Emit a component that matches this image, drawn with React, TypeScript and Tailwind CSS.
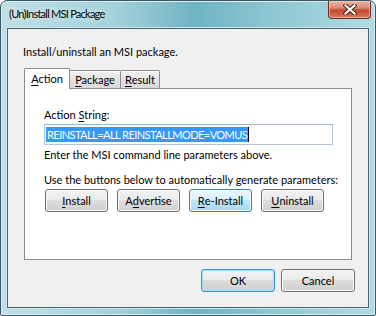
import React from 'react';

const font = { fontFamily: 'Lato, "Noto Sans", sans-serif' };

const U = ({ children }: { children: React.ReactNode }) => (
  <span className="underline underline-offset-[2px] decoration-[1px]">{children}</span>
);

type Kind = 'normal' | 'hot' | 'default';

const Btn = ({ kind = 'normal', wide, children }: { kind?: Kind; wide?: boolean; children: React.ReactNode }) => {
  const look =
    kind === 'hot'
      ? 'border-[#3c7fb1] bg-[linear-gradient(#eaf6fd_0%,#d9f0fc_45%,#bee6fd_50%,#a7d9f5_100%)] shadow-[inset_0_0_0_1px_#f4fbff]'
      : kind === 'default'
        ? 'border-[#3399dd] bg-[linear-gradient(#f2f2f2_0%,#ebebeb_45%,#dddddd_50%,#cfcfcf_100%)] shadow-[inset_0_0_0_1px_#9fe0f7]'
        : 'border-[#707070] bg-[linear-gradient(#f2f2f2_0%,#ebebeb_45%,#dddddd_50%,#cfcfcf_100%)] shadow-[inset_0_0_0_1px_#fbfbfb]';
  return (
    <div
      className={`${wide ? 'w-[74px]' : 'w-[63px]'} h-[23px] flex items-center justify-center rounded-[3px] border text-[11px] text-black ${look}`}
    >
      {children}
    </div>
  );
};

export default function App() {
  return (
    <div className="w-[376px] h-[316px] bg-white" style={font}>
      <div className="w-full h-full flex flex-col rounded-t-[7px] rounded-b-[2px] border border-[#3b5863] bg-[linear-gradient(90deg,#bfe0e6_0%,#a4d2db_30%,#6fb4c3_52%,#8cc6d1_72%,#b2dbe2_100%)] shadow-[inset_0_0_0_1px_#d6eef2] overflow-hidden">
        {/* title bar */}
        <div className="h-[27px] flex items-start">
          <span className="ml-[8px] mt-[5px] text-[11px] tracking-[-0.75px] leading-[16px] text-black [text-shadow:0_0_6px_rgba(255,255,255,0.9)]">
            (Un)Install MSI Package
          </span>
          <div className="ml-auto mr-[4px] w-[43px] h-[18px] flex items-center justify-center rounded-b-[4px] border border-t-0 border-[#6b3024] bg-[linear-gradient(#eab3a4_0%,#d98a76_40%,#c4462f_55%,#d67b62_100%)] shadow-[inset_0_0_0_1px_rgba(255,220,210,0.5)]">
            <svg width="14" height="11" viewBox="0 0 14 11">
              <path d="M2.5 1.5 L11.5 9.5 M11.5 1.5 L2.5 9.5" stroke="#4a2018" strokeWidth="4.2" strokeLinecap="square" />
              <path d="M2.5 1.5 L11.5 9.5 M11.5 1.5 L2.5 9.5" stroke="#ffffff" strokeWidth="2.2" strokeLinecap="square" />
            </svg>
          </div>
        </div>

        {/* client area */}
        <div className="flex-1 mx-[6px] mb-[7px] border border-[#4a636c] bg-[#f0f0f0] shadow-[0_0_0_1px_#cde9ef] flex flex-col text-[11px] leading-[16px] text-black">
          <p className="mt-[15px] ml-[15px]">Install/uninstall an MSI package.</p>

          <div className="mt-[8px] px-[16px] flex flex-col">
            {/* tabs */}
            <div className="flex items-end h-[20px]">
              <div className="w-[46px] h-[21px] -mb-px z-10 border border-b-0 border-[#898c95] bg-white rounded-t-[2px] flex items-center justify-center pb-px">
                <span><U>A</U>ction</span>
              </div>
              <div className="w-[51px] h-[18px] border border-l-0 border-b-0 border-[#898c95] bg-[linear-gradient(#f2f2f2,#e3e3e3_50%,#d9d9d9)] shadow-[inset_0_1px_0_#ffffff] rounded-tr-[2px] flex items-center justify-center">
                <span><U>P</U>ackage</span>
              </div>
              <div className="w-[39px] h-[18px] border border-l-0 border-b-0 border-[#898c95] bg-[linear-gradient(#f2f2f2,#e3e3e3_50%,#d9d9d9)] shadow-[inset_0_1px_0_#ffffff] rounded-tr-[2px] flex items-center justify-center">
                <span><U>R</U>esult</span>
              </div>
            </div>

            {/* panel */}
            <div className="h-[172px] border border-[#898c95] bg-white pt-[18px] pl-[19px] flex flex-col">
              <p>Action <U>S</U>tring:</p>
              <div className="mt-px w-[289px] h-[21px] border border-[#b4c4d6] border-t-[#a5b3c3] bg-white flex items-center pl-px">
                <span className="bg-[#3399ff] text-white leading-[15px] px-px tracking-[-0.55px]">REINSTALL=ALL REINSTALLMODE=VOMUS</span>
                <span className="w-px h-[15px] bg-black" />
              </div>
              <p className="mt-[2px]">Enter the MSI command line parameters above.</p>
              <p className="mt-[9px]">Use the buttons below to automatically generate parameters:</p>
              <div className="mt-px ml-px flex gap-[9px]">
                <Btn><U>I</U>nstall</Btn>
                <Btn>A<U>d</U>vertise</Btn>
                <Btn kind="hot"><U>R</U>e-Install</Btn>
                <Btn><U>U</U>ninstall</Btn>
              </div>
            </div>

            <div className="mt-[9px] -mr-[3px] flex justify-end gap-[6px]">
              <Btn kind="default" wide>OK</Btn>
              <Btn wide>Cancel</Btn>
            </div>
          </div>
        </div>
      </div>
    </div>
  );
}
